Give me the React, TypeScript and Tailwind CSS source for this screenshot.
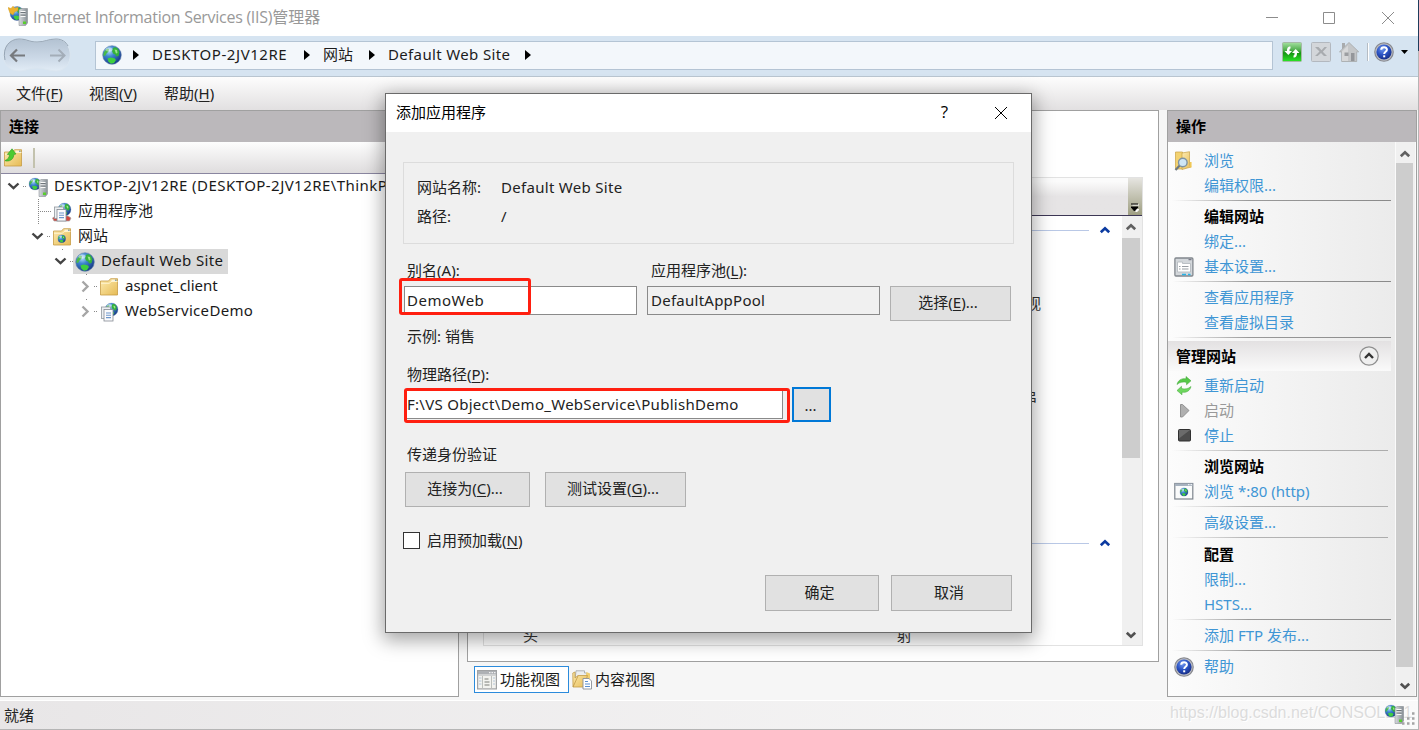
import type { ReactNode } from 'react';
import clsx from 'clsx';

const UI_FONT = "font-['Noto_Sans','Noto_Sans_CJK_SC',sans-serif]";

/* ---------- icons ---------- */

function Defs() {
  return (
    <svg width="0" height="0" className="absolute" aria-hidden>
      <defs>
        <radialGradient id="sea" cx="35%" cy="28%" r="75%">
          <stop offset="0" stopColor="#b9e2fb" />
          <stop offset="0.4" stopColor="#3f87d0" />
          <stop offset="1" stopColor="#173a86" />
        </radialGradient>
        <linearGradient id="folder" x1="0" y1="0" x2="1" y2="1">
          <stop offset="0" stopColor="#fdebb0" />
          <stop offset="1" stopColor="#e6bb55" />
        </linearGradient>
        <linearGradient id="steel" x1="0" y1="0" x2="1" y2="0">
          <stop offset="0" stopColor="#d9dde0" />
          <stop offset="1" stopColor="#868e94" />
        </linearGradient>
        <radialGradient id="help" cx="40%" cy="30%" r="75%">
          <stop offset="0" stopColor="#6f97ee" />
          <stop offset="0.5" stopColor="#2b53c4" />
          <stop offset="1" stopColor="#152a80" />
        </radialGradient>
        <linearGradient id="go" x1="0" y1="0" x2="0" y2="1">
          <stop offset="0" stopColor="#a4e0a0" />
          <stop offset="0.4" stopColor="#4fae4c" />
          <stop offset="0.55" stopColor="#169414" />
          <stop offset="1" stopColor="#2be626" />
        </linearGradient>
        <linearGradient id="nav" x1="0" y1="0" x2="0" y2="1">
          <stop offset="0" stopColor="#b3c2d2" />
          <stop offset="0.6" stopColor="#ccd9e7" />
          <stop offset="1" stopColor="#e2ecf6" />
        </linearGradient>
      </defs>
    </svg>
  );
}

function GlobeShape({ x = 0, y = 0, s = 20 }: { x?: number; y?: number; s?: number }) {
  return (
    <svg x={x} y={y} width={s} height={s} viewBox="0 0 20 20">
      <circle cx="10" cy="10" r="9.3" fill="url(#sea)" stroke="#5f7fae" strokeWidth="0.6" />
      <path d="M11 3c2-1.500 4-.5 5 1l1.500 3-1 4-2 .5-1.500-2-2-1-1-2.500z" fill="#35b23a" />
      <path d="M2 7l3-3.500 2 .5-.5 2.500-2 2L3 11l-1.800-.5z" fill="#49b94a" />
      <path d="M5.500 13.500l3-1 4 .8 1.500 1.700-2 3-3 .8-2.500-2z" fill="#3fce3f" />
      <path d="M12.500 4.500l2.500.5.500 3-1.500.5z" fill="#9be38a" />
      <ellipse cx="7" cy="4.500" rx="3.500" ry="2" fill="#fff" opacity="0.4" />
    </svg>
  );
}

function Globe() {
  return (
    <svg width="20" height="20" viewBox="0 0 20 20">
      <GlobeShape />
    </svg>
  );
}

function ServerIcon({ crown = false }: { crown?: boolean }) {
  return (
    <svg width="20" height="20" viewBox="0 0 20 20">
      {crown ? <GlobeShape x={1.500} y={0} s={15} /> : <GlobeShape x={0.500} y={0.500} s={13} />}
      {crown ? (
        <path d="M0 1.500l3 1 2-2.300 2 2 3-1.200v3.500L6.500 6 5 9 2 7z" fill="#eeb22c" stroke="#d09a20" strokeWidth="0.5" />
      ) : null}
      <path d="M11 4l2-1.500h6.500V17l-2 2.500H11z" fill="url(#steel)" stroke="#7c8388" strokeWidth="0.5" />
      <path d="M12.500 5.500h5M12.500 8h5M12.500 10.500h5" stroke="#f8f8f8" />
      <path d="M12.500 6.500h5M12.500 9h5" stroke="#5d656b" strokeWidth="0.8" />
      <rect x="15" y="15.500" width="3" height="2.500" fill="#58cf2c" />
    </svg>
  );
}

function FolderShape() {
  return (
    <>
      <path d="M1.500 4h8l2-2.300h7V18h-17z" fill="url(#folder)" stroke="#c79c45" strokeWidth="0.8" />
      <path d="M2 6.300h8.500l1.500-1.800h6.500" fill="none" stroke="#fff6d5" strokeWidth="0.9" />
      <path d="M12.500 3.200h3.500" stroke="#fff" />
      <path d="M16 3.200h1.500" stroke="#4f94d8" />
    </>
  );
}

function FolderIcon({ globe = false }: { globe?: boolean }) {
  return (
    <svg width="20" height="20" viewBox="0 0 20 20">
      <FolderShape />
      {globe ? <GlobeShape x={5.500} y={7.500} s={8.500} /> : null}
    </svg>
  );
}

function UpFolderIcon() {
  return (
    <svg width="20" height="20" viewBox="0 0 20 20">
      <FolderShape />
      <path d="M2 12.500c3-1 4.300-3 4.500-6H4.300L9 .8l4 5.200-2.200.5c0 4-3 7-7.800 6.500z" fill="#4ccb30" stroke="#2f9c1c" strokeWidth="0.6" />
    </svg>
  );
}

function PoolIcon({ lids = false }: { lids?: boolean }) {
  return (
    <svg width="20" height="20" viewBox="0 0 20 20">
      <GlobeShape x={5.500} y={0.500} s={14} />
      {lids ? <path d="M.5 16l3-2h12.500l3 2-1.500 3h-15.500z" fill="#d3473f" stroke="#a3a3a3" strokeWidth="0.7" /> : null}
      <rect x="2.500" y="5" width="9" height="11.500" fill="#eceff2" stroke="#92989f" strokeWidth="0.8" />
      <rect x="5" y="7.500" width="9" height="11.500" fill="#fbfbfc" stroke="#848b93" strokeWidth="0.8" />
      <path d="M7 11h5M7 13.300h5M7 15.600h5" stroke="#6d96ca" strokeWidth="1.100" />
    </svg>
  );
}

function HelpIcon() {
  return (
    <svg width="20" height="20" viewBox="0 0 20 20">
      <circle cx="10" cy="10" r="9.800" fill="#85868c" />
      <circle cx="10" cy="10" r="8.700" fill="#b9bbc2" />
      <circle cx="10" cy="10" r="7.600" fill="url(#help)" />
      <path d="M7.200 7.800c.1-3.400 5.800-3.300 5.700-.1 0 2.100-2.700 2.100-2.700 4.200" fill="none" stroke="#fff" strokeWidth="2" />
      <rect x="9.200" y="13.300" width="2" height="2" fill="#fff" />
    </svg>
  );
}

function RefreshBox() {
  return (
    <svg width="20" height="20" viewBox="0 0 20 20">
      <rect x="0.500" y="0.500" width="19" height="19" rx="1" fill="url(#go)" stroke="#a5b9a5" />
      <path d="M8.500 4.500C5.500 4.500 5 6.500 5 9H2.500L6.300 13 10 9H7.500c0-1.500 0-2.300 1-2.500z" fill="#fff" />
      <path d="M11.500 15.500c3 0 3.500-2 3.500-4.500h2.500L13.700 7 10 11h2.500c0 1.500 0 2.300-1 2.500z" fill="#fff" />
    </svg>
  );
}

function StopBox() {
  return (
    <svg width="20" height="20" viewBox="0 0 20 20">
      <rect x="0.500" y="0.500" width="19" height="19" rx="1" fill="#d3d6da" stroke="#b3b8bf" />
      <path d="M4 5h3.500l3 3.200L13.500 5H16l-4.200 4.700 4.200 4.300h-3l-3-3-3.300 3H4l4.500-4.500z" fill="#a8abaf" />
    </svg>
  );
}

function HomeIcon() {
  return (
    <svg width="20" height="20" viewBox="0 0 20 20">
      <rect x="3" y="1" width="3" height="6" fill="#a9abad" />
      <path d="M10 .5L.5 9.800h2.200V19.500h15V9.800h2z" fill="#c4c6c8" stroke="#a6a8aa" strokeWidth="0.8" />
      <path d="M10 2.500L3 9.500V19h6V3.500z" fill="#d7d8d9" />
      <rect x="5.500" y="10.500" width="4" height="3.500" fill="#9c9ea1" />
      <rect x="12" y="11" width="3.500" height="8" fill="#94969a" />
    </svg>
  );
}

function BrowseIcon() {
  return (
    <svg width="20" height="20" viewBox="0 0 20 20">
      <path d="M1.500 1h7v17h-7z" fill="#f3d270" stroke="#c9a144" strokeWidth="0.7" />
      <path d="M8 2l7.500-1.300V14l1.500 2-9 2.500z" fill="url(#folder)" stroke="#c9a144" strokeWidth="0.7" />
      <path d="M16.800 11v5.500" stroke="#f0c64f" strokeWidth="1.500" />
      <circle cx="8.800" cy="11.500" r="4.300" fill="#cfe6f6" stroke="#7e93a4" strokeWidth="1.400" />
      <path d="M5.500 14.800L1.500 19" stroke="#6d7880" strokeWidth="2.200" />
    </svg>
  );
}

function SettingsPageIcon() {
  return (
    <svg width="20" height="20" viewBox="0 0 20 20">
      <rect x="0.900" y="1" width="18" height="18" rx="1" fill="#d3d7db" stroke="#81878d" strokeWidth="1.300" />
      <path d="M14.500 2.700h3" stroke="#667" />
      <path d="M3.500 5h5v1.500h8V15h-13z" fill="#fff" stroke="#b6bbc1" strokeWidth="0.900" />
      <path d="M5 9.500h1.500M5 12h1.500M8 9.500h6.500M8 12h6.500" stroke="#989da3" />
      <path d="M8 17.500h4M14 17.500h2.500" stroke="#29b3e6" strokeWidth="1.600" />
    </svg>
  );
}

function BrowserIcon() {
  return (
    <svg width="20" height="20" viewBox="0 0 20 20">
      <rect x="0.800" y="1.500" width="18" height="15.500" fill="#fafbfb" stroke="#7d858e" strokeWidth="1.200" />
      <rect x="1" y="1.500" width="17.600" height="2.500" fill="#a7b2bf" />
      <path d="M14 2.700h1.500M16.500 2.700h1.500" stroke="#fff" />
      <GlobeShape x={5.500} y={5.500} s={9} />
    </svg>
  );
}

function RestartIcon() {
  return (
    <svg width="20" height="20" viewBox="0 0 20 20">
      <path d="M3 8.500C4 4 8 2 12 2.800V.5L17 4.800 12.500 8.800V6.500C9.500 5.500 6 6 3 8.500z" fill="#56c847" stroke="#3fa536" strokeWidth="0.500" />
      <path d="M17 10.500C16 15 12 17 8 16.200v2.600L3 14.500l4.500-4.200V12.500c3 1 6.500.5 9.500-2z" fill="#6fd75f" stroke="#3fa536" strokeWidth="0.500" />
    </svg>
  );
}

function StartIcon() {
  return (
    <svg width="20" height="20" viewBox="0 0 20 20">
      <path d="M6.500 3.500h2l6.500 6-6.500 6.500h-2z" fill="#b0b0b0" stroke="#8a8a8a" strokeWidth="0.900" />
    </svg>
  );
}

function StopIcon() {
  return (
    <svg width="20" height="20" viewBox="0 0 20 20">
      <rect x="4.500" y="3.500" width="12" height="11.500" rx="1" fill="#4d4d4d" stroke="#303030" />
      <path d="M5 4h11L5 12.500z" fill="#6b6b6b" />
    </svg>
  );
}

function FeaturesIcon() {
  return (
    <svg width="20" height="20" viewBox="0 0 20 20">
      <rect x="0.600" y="0.600" width="18.800" height="18.300" fill="#f3f3f0" stroke="#a0a2a4" strokeWidth="1.200" />
      <rect x="1" y="1" width="18" height="3.500" fill="#aeb1b5" />
      <path d="M12 2.700h1.500M14.500 2.700H16M17 2.700h1.500" stroke="#fff" />
      <path d="M1 5.500h18" stroke="#d0d2d3" />
      <path d="M5.500 6v12.500M14.500 6v12.500" stroke="#bcbfbc" />
      <path d="M2 8h2.500M2 11h2.500M2 14h2.500M16 8h2M16 11h2M16 14h2" stroke="#b4c6d8" />
      <path d="M7.500 9h4M7.500 12h5M7.500 15h5" stroke="#7c7f78" strokeWidth="1.200" />
    </svg>
  );
}

function ContentIcon() {
  return (
    <svg width="20" height="20" viewBox="0 0 20 20">
      <path d="M4 .8h8.500V3H15v7H3z" fill="#eceef0" stroke="#9fa3a7" strokeWidth="0.800" />
      <path d="M14.500 2l3.500 1.500v8h-5z" fill="#f0cf74" />
      <path d="M.8 3l2.200-1v6l3-2.500h9.500L12 17H1z" fill="url(#folder)" stroke="#c39c48" strokeWidth="0.800" />
      <path d="M1 17L6 6" stroke="#b78f3c" strokeWidth="0.700" />
      <path d="M11 8.500h6l2.500 2.500v8H11z" fill="#fff" stroke="#8b9097" strokeWidth="0.900" />
      <path d="M13 11.500h3M13 14h5M13 16.500h5" stroke="#5a8fd0" strokeWidth="1.100" />
    </svg>
  );
}

function Chevron({ dir, className }: { dir: 'up' | 'down'; className: string }) {
  return (
    <svg width="12" height="12" viewBox="0 0 12 12" className={className}>
      <path
        d={dir === 'up' ? 'M1.800 8.300L6 4.200l4.200 4.100' : 'M1.800 3.700L6 7.800l4.200-4.100'}
        fill="none"
        stroke="currentColor"
        strokeWidth="2.600"
      />
    </svg>
  );
}

function Crumb() {
  return (
    <svg width="6" height="10" viewBox="0 0 6 10" className="shrink-0">
      <path d="M0 0l6 5-6 5z" fill="#000" />
    </svg>
  );
}

/* ---------- small pieces ---------- */

function Key({ children }: { children: string }) {
  return (
    <>
      (<span className="underline underline-offset-2">{children}</span>)
    </>
  );
}

function PushButton({ className, children }: { className?: string; children: ReactNode }) {
  return (
    <button
      type="button"
      className={clsx(
        'flex items-center justify-center border-[1.5px] border-[#b0b0b0] bg-[#e1e1e1] pr-[5px] pb-[3px]',
        className,
      )}
    >
      <span>{children}</span>
    </button>
  );
}

/* ---------- window chrome ---------- */

function TitleBar() {
  return (
    <header className="flex h-9 shrink-0 items-center bg-white pb-[3px] pl-2">
      <span className="-mt-0.5"><ServerIcon crown /></span>
      <h1 className="ml-[5px] text-base leading-8 text-[#999] font-['Open_Sans','Noto_Sans_CJK_SC',sans-serif]">
        <span className="tracking-[-0.28px]">Internet Information Services (IIS)</span>管理器
      </h1>
      <div className="ml-auto flex items-center gap-[46px] pt-[2px] pr-[25px] text-[#8c8c8c]">
        <svg width="12" height="12" viewBox="0 0 12 12" className="-mr-px">
          <path d="M0 5.500h12" stroke="currentColor" />
        </svg>
        <svg width="12" height="12" viewBox="0 0 12 12">
          <path d="M.5.5h11v11H.5z" fill="none" stroke="currentColor" />
        </svg>
        <svg width="12" height="12" viewBox="0 0 12 12" className="ml-px">
          <path d="M0 0l12 12M12 0L0 12" stroke="currentColor" />
        </svg>
      </div>
    </header>
  );
}

function AddressBar() {
  return (
    <div className="flex h-[41px] shrink-0 items-start border-b border-[#b9c5d0] bg-[#d6e4f1]">
      <svg width="70" height="36" viewBox="0 0 70 36" className="ml-[3px] mt-0.5 shrink-0">
        <path
          d="M16 1c8 0 10 3 18 3s11-3 19-3c19 0 19 32 0 32-8 0-11-3-19-3s-10 3-18 3C-5 33-5 1 16 1z"
          fill="url(#nav)"
          stroke="#dbe6f0"
        />
        <path d="M2 22C-1 9 7 1 16 1c8 0 10 3 18 3s11-3 19-3c6 0 10 3 12 7" fill="none" stroke="#97a6b5" />
        <path d="M22 17.500H8.500M14 11.500l-6 6 6 6" fill="none" stroke="#777a7e" strokeWidth="2.200" />
        <path d="M47 17.500h14M55.500 11.500l6 6-6 6" fill="none" stroke="#a3adb8" strokeWidth="2" />
      </svg>
      <div className="ml-[22px] mt-[5px] flex h-[29px] w-[1178px] shrink-0 items-center border border-[#b4c4d4] bg-[#f3f7fb] pb-0.5 pl-1.5 text-[#1c1c1c]">
        <Globe />
        <div className="ml-[11px] flex items-center">
          <Crumb />
          <span className="ml-[13px] w-[152px] pb-0.5 tracking-[0.55px]">DESKTOP-2JV12RE</span>
          <Crumb />
          <span className="ml-[13px] w-[46px] pb-0.5">网站</span>
          <Crumb />
          <span className="ml-[13px] w-[137px] pb-0.5 tracking-[0.35px]">Default Web Site</span>
          <Crumb />
        </div>
      </div>
      <div className="ml-[9px] mt-1.5 flex items-center">
        <RefreshBox />
        <span className="ml-[9px]"><StopBox /></span>
        <span className="ml-2"><HomeIcon /></span>
        <span className="ml-2 h-[18px] w-0.5 border-l border-[#b5bcc4] bg-white" />
        <span className="ml-[5px]"><HelpIcon /></span>
        <svg width="7" height="4" viewBox="0 0 7 4" className="ml-[7px]">
          <path d="M0 0h7L3.500 4z" />
        </svg>
      </div>
    </div>
  );
}

function MenuBar() {
  return (
    <nav className="flex h-[33px] shrink-0 items-center bg-linear-to-b from-[#fdfdfd] to-[#e2e0e1] pb-0.5 pl-4 text-[#222]">
      <span className="w-[73px]">文件<Key>F</Key></span>
      <span className="w-[75px]">视图<Key>V</Key></span>
      <span>帮助<Key>H</Key></span>
    </nav>
  );
}

/* ---------- connections tree ---------- */

type TreeNode = {
  label: string;
  depth: number;
  state?: 'open' | 'closed';
  stub?: boolean;
  selected?: boolean;
  tracking?: string;
  icon: ReactNode;
};

const nodes: TreeNode[] = [
  {
    label: 'DESKTOP-2JV12RE (DESKTOP-2JV12RE\\ThinkPad)',
    depth: 0,
    state: 'open',
    tracking: 'tracking-[0.45px]',
    icon: <ServerIcon />,
  },
  { label: '应用程序池', depth: 1, icon: <PoolIcon lids /> },
  { label: '网站', depth: 1, state: 'open', icon: <FolderIcon globe /> },
  {
    label: 'Default Web Site',
    depth: 2,
    state: 'open',
    stub: true,
    selected: true,
    tracking: 'tracking-[0.35px]',
    icon: <Globe />,
  },
  { label: 'aspnet_client', depth: 3, state: 'closed', stub: true, icon: <FolderIcon /> },
  {
    label: 'WebServiceDemo',
    depth: 3,
    state: 'closed',
    stub: true,
    tracking: 'tracking-[0.3px]',
    icon: <PoolIcon />,
  },
];

const indent = ['pl-0', 'pl-6', 'pl-[47px]', 'pl-[71px]'];

function TreeRow({ node }: { node: TreeNode }) {
  return (
    <li className={clsx('flex h-[25px] items-center whitespace-nowrap', indent[node.depth])}>
      <svg width="26" height="25" viewBox="0 0 26 25" className="shrink-0">
        {node.state === 'open' ? (
          <path d="M7.500 9.500l5 4.700 5-4.700" fill="none" stroke="#444" strokeWidth="2.400" />
        ) : null}
        {node.state === 'closed' ? (
          <path d="M10.500 7.500l5 5-5 5" fill="none" stroke="#a6a6a6" strokeWidth="2.400" />
        ) : null}
        {node.state ? (
          <path d="M22 12.500h4" stroke="#888" strokeDasharray="1 1" />
        ) : (
          <path d="M13.500 0v25M15 12.500h11" fill="none" stroke="#888" strokeDasharray="1 1" />
        )}
        {node.stub ? <path d="M14.500 0v2" stroke="#888" strokeDasharray="1 1" /> : null}
      </svg>
      <span className={clsx('flex h-[25px] items-center', node.selected ? '-ml-px bg-[#d9d9d9] pr-[5px] pl-0.5' : 'pl-px')}>
        {node.icon}
        <span className={clsx('ml-1.5 pb-[3px]', node.tracking)}>{node.label}</span>
      </span>
    </li>
  );
}

function Connections() {
  return (
    <section className="flex w-[459px] shrink-0 flex-col border border-[#a0a0a0] bg-white">
      <h2 className="flex h-[31px] items-center bg-[#bbb8bb] pb-0.5 pl-2 font-bold text-black">连接</h2>
      <div className="flex h-8 items-center border-b-[1.5px] border-[#8a86a0] bg-linear-to-b from-[#fdfdfd] to-[#dfddde] pt-px pl-0.5">
        <UpFolderIcon />
        <span className="ml-2.5 h-5 w-0.5 bg-[#c3c2ae]" />
      </div>
      <ul className="overflow-hidden text-[#1a1a1a]">
        {nodes.map((n) => (
          <TreeRow key={n.label} node={n} />
        ))}
      </ul>
    </section>
  );
}

/* ---------- feature view ---------- */

function GroupRule() {
  return (
    <div className="flex h-7 shrink-0 items-center pr-[11px]">
      <span className="mr-2.5 h-px flex-1 bg-[#b9c8e6]" />
      <Chevron dir="up" className="text-[#0b3aa0]" />
    </div>
  );
}

function Features() {
  return (
    <section className="ml-2 flex w-[692px] shrink-0 flex-col">
      <div className="flex h-[552px] flex-col border border-[#a0a0a0] bg-white px-[15px] pt-[66px] pb-[15px]">
        <div className="flex min-h-0 flex-1 flex-col border border-[#e2e2e2]">
          <div className="flex h-[38px] shrink-0 border-b border-[#3d3755] bg-linear-to-b from-[#fbfbfb] from-10% to-[#e6e4e5] to-50%">
            <div className="ml-auto flex w-3.5 items-end justify-center bg-linear-to-b from-[#e6e5e1] to-[#9f9f82] pb-[3px]">
              <svg width="8" height="9" viewBox="0 0 8 9">
                <path d="M1.500 2h6.500M3 6.500h5L5.500 9z" stroke="#fff" fill="#fff" />
                <path d="M0 1h7M0 4h7L3.500 8z" stroke="#000" strokeWidth="1" fill="#000" />
              </svg>
            </div>
          </div>
          <div className="flex min-h-0 flex-1">
            <div className="flex flex-1 flex-col overflow-hidden text-[#333]">
              <GroupRule />
              <div className="flex h-[77px] shrink-0 items-end justify-end pr-[81px] pb-1.5">视</div>
              <div className="flex h-[94px] shrink-0 items-end justify-end pr-[85px] pb-1.5">串</div>
              <div className="h-[114px] shrink-0" />
              <GroupRule />
              <div className="mt-[66px] flex h-6 shrink-0 pl-[39px]">
                <span className="w-[374px]">头</span>
                <span>射</span>
              </div>
            </div>
            <div className="flex w-5 flex-col items-center bg-[#f0f0f0] pr-0.5">
              <Chevron dir="up" className="my-[5px] shrink-0 text-[#606060]" />
              <div className="h-[220px] w-full shrink-0 bg-[#cdcdcd]" />
              <Chevron dir="down" className="mt-auto mb-1 text-[#505050]" />
            </div>
          </div>
        </div>
      </div>
      <div className="mt-1 flex items-center pl-[7px] text-[#1a1a1a]">
        <span className="flex h-[27px] w-[95px] items-center border-[1.5px] border-[#2b8bdc] bg-white pl-0.5">
          <FeaturesIcon />
          <span className="ml-[3px] pb-0.5">功能视图</span>
        </span>
        <span className="ml-[3px] flex items-center">
          <ContentIcon />
          <span className="ml-[3px] pb-0.5">内容视图</span>
        </span>
      </div>
    </section>
  );
}

/* ---------- actions pane ---------- */

function Rule({ className = 'h-1.5', light }: { className?: string; light?: boolean }) {
  return (
    <div className={clsx('pt-0.5 pl-1', className)}>
      <div
        className={clsx(
          'h-px bg-linear-to-r from-transparent',
          light ? 'w-[216px] via-[#b4b4b4] via-35% to-[#acacac]' : 'w-[219px] via-[#9a9a9a] via-35% to-[#8a8a8a]',
        )}
      />
    </div>
  );
}

function Action({ icon, muted, children }: { icon?: ReactNode; muted?: boolean; children: ReactNode }) {
  return (
    <div className={clsx('flex h-[25px] items-center pl-1.5', muted ? 'text-[#999]' : 'text-[#3f96d5]')}>
      <span className="flex w-[30px] shrink-0">{icon}</span>
      <span className="pb-0.5">{children}</span>
    </div>
  );
}

function Heading({ children }: { children: string }) {
  return <h3 className="flex h-[25px] items-center pb-0.5 pl-9 font-bold text-black">{children}</h3>;
}

function Actions() {
  return (
    <aside className="ml-2 flex w-[250px] shrink-0 flex-col border border-[#a0a0a0]">
      <h2 className="flex h-[31px] shrink-0 items-center bg-[#bbb8bb] pb-0.5 pl-2 font-bold text-black">操作</h2>
      <div className="flex min-h-0 flex-1">
        <div className="flex-1 bg-linear-to-r from-[#fcfcfc] to-[#ebebeb] pt-1.5">
          <Action icon={<BrowseIcon />}>浏览</Action>
          <Action>编辑权限...</Action>
          <Rule />
          <Heading>编辑网站</Heading>
          <Action>绑定...</Action>
          <Action icon={<SettingsPageIcon />}>基本设置...</Action>
          <Rule />
          <Action>查看应用程序</Action>
          <Action>查看虚拟目录</Action>
          <Rule />
          <div className="mb-0.5 flex h-[30px] w-[223px] items-center bg-linear-to-b from-[#e3e1e2] to-[#fafafa] pl-2">
            <h3 className="font-bold text-black">管理网站</h3>
            <svg width="20" height="20" viewBox="0 0 20 20" className="mr-3 ml-auto">
              <circle cx="10" cy="10" r="9.200" fill="#efefef" stroke="#8f8f8f" strokeWidth="1.200" />
              <path d="M6 12l4-4 4 4" fill="none" stroke="#333" strokeWidth="2.400" />
            </svg>
          </div>
          <Action icon={<RestartIcon />}>重新启动</Action>
          <Action icon={<StartIcon />} muted>启动</Action>
          <Action icon={<StopIcon />}>停止</Action>
          <Rule light />
          <Heading>浏览网站</Heading>
          <Action icon={<BrowserIcon />}>浏览 *:80 (http)</Action>
          <Rule light />
          <Action>高级设置...</Action>
          <Rule light className="h-[7px]" />
          <Heading>配置</Heading>
          <Action>限制...</Action>
          <Action>HSTS...</Action>
          <Rule />
          <Action>添加 FTP 发布...</Action>
          <Rule />
          <Action icon={<HelpIcon />}>帮助</Action>
        </div>
        <div className="flex w-[21px] flex-col items-center border-x border-[#fafafa] bg-[#f0f0f0] pr-0.5">
          <Chevron dir="up" className="mt-1.5 mb-[3px] shrink-0 text-[#606060]" />
          <div className="w-full flex-1 bg-[#cdcdcd]" />
          <Chevron dir="down" className="mt-[13px] mb-1 shrink-0 text-[#505050]" />
        </div>
      </div>
    </aside>
  );
}

function StatusBar() {
  return (
    <footer className="mt-[3px] flex h-[30px] shrink-0 items-center border-t border-b border-t-white border-b-[#b5b5b5] bg-linear-to-r from-[#e8e6e7] to-[#fafafa] pl-1 text-[#222]">
      <span className="pb-px">就绪</span>
      <div className="relative mr-1 ml-auto flex h-full w-[245px] items-center">
        <span className="pb-1 text-base text-[#dcdcdc] font-['Liberation_Sans',sans-serif] [text-shadow:1px_1px_0_#fff]">
          https://blog.csdn.net/CONSOLE11
        </span>
        <span className="absolute top-[3px] right-[11px]">
          <ServerIcon />
        </span>
        <svg width="14" height="14" viewBox="0 0 14 14" className="absolute right-0 bottom-[3px] text-[#a4a4a4]">
          <path d="M11 1.500h2.500M6 6.500h2.500M11 6.500h2.500M1 11.500h2.500M6 11.500h2.500M11 11.500h2.500" stroke="currentColor" strokeWidth="2.500" />
        </svg>
      </div>
    </footer>
  );
}

/* ---------- dialog ---------- */

function AddApplicationDialog() {
  return (
    <div
      role="dialog"
      className="absolute top-[93px] left-[385px] flex h-[540px] w-[647px] flex-col border border-[#6a6a6a] bg-[#f0f0f0] text-[#222] shadow-[0_5px_18px_2px_rgba(0,0,0,0.36)]"
    >
      <div className="flex h-[38px] shrink-0 items-center bg-white pb-0.5 pl-2.5 text-black">
        添加应用程序
        <span className="ml-auto text-[17px] font-['Open_Sans',sans-serif]">?</span>
        <svg width="12" height="12" viewBox="0 0 12 12" className="mt-px mr-6 ml-[47px]">
          <path d="M0 0l12 12M12 0L0 12" stroke="#000" />
        </svg>
      </div>

      <div className="mt-[30px] ml-[17px] h-[82px] w-[611px] border-[1.5px] border-[#dcdcdc] pt-2.5 pl-[13px]">
        <div className="flex h-[29px] items-center pb-px">
          <span className="w-[84px]">网站名称:</span>
          <span className="tracking-[0.3px]">Default Web Site</span>
        </div>
        <div className="flex h-[29px] items-center pb-px">
          <span className="w-[84px]">路径:</span>/
        </div>
      </div>

      <div className="mt-[13px] flex h-[25px] items-center pl-[21px]">
        <span className="w-[244px]">别名<Key>A</Key>:</span>
        <span>应用程序池<Key>L</Key>:</span>
      </div>
      <div className="mt-1 flex items-start pl-[18px]">
        <div className="relative flex h-[29px] w-[233px] items-center border-[1.5px] border-[#8a8a8a] bg-white pb-0.5 pl-0.5">
          <span className="tracking-[0.5px]">DemoWeb</span>
          <span className="absolute -top-[9px] -left-1.5 h-[37px] w-[132px] rounded-[3px] border-[3px] border-[#ff1f10]" />
        </div>
        <div className="ml-2.5 flex h-[29px] w-[233px] items-center border-[1.5px] border-[#8a8a8a] pb-0.5 pl-[3px]">
          <span className="tracking-[0.25px]">DefaultAppPool</span>
        </div>
        <PushButton className="ml-2.5 h-[35px] w-[121px]">选择<Key>E</Key>...</PushButton>
      </div>
      <div className="mt-0.5 flex h-[25px] items-center pl-[21px]">示例: 销售</div>
      <div className="mt-[13px] flex h-[25px] items-center pl-[21px]">物理路径<Key>P</Key>:</div>
      <div className="mt-px flex items-center pl-[18px]">
        <div className="relative flex h-[29px] w-[379px] items-center border-[1.5px] border-[#8a8a8a] bg-white pb-0.5 pl-0.5">
          <span className="tracking-[0.28px]">F:\VS Object\Demo_WebService\PublishDemo</span>
          <span className="absolute -top-[3px] -left-px h-[35px] w-[386px] rounded-[3px] border-[3px] border-[#ff1f10]" />
        </div>
        <button
          type="button"
          className="ml-[9px] flex h-[35px] w-[39px] items-center justify-center border-2 border-[#0078d7] bg-[#e1e1e1] pr-0.5"
        >
          ...
        </button>
      </div>
      <div className="mt-[19px] flex h-[25px] items-center pl-[21px]">传递身份验证</div>
      <div className="mt-1.5 flex pl-[19px]">
        <PushButton className="h-[35px] w-[125px]">连接为<Key>C</Key>...</PushButton>
        <PushButton className="ml-[15px] h-[35px] w-[141px]">测试设置<Key>G</Key>...</PushButton>
      </div>
      <label className="mt-[21px] flex h-[25px] items-center pl-[17px]">
        <span className="mr-[7px] size-[17px] border-[1.5px] border-[#333] bg-white" />
        <span className="pb-0.5">启用预加载<Key>N</Key></span>
      </label>
      <div className="mt-[22px] flex justify-end pr-[19px]">
        <PushButton className="h-9 w-[114px]">确定</PushButton>
        <PushButton className="ml-3 h-9 w-[121px]">取消</PushButton>
      </div>
    </div>
  );
}

export default function App() {
  return (
    <div className={clsx('relative flex h-[730px] w-[1419px] flex-col overflow-hidden bg-[#f6f6f6] text-[15px] leading-6', UI_FONT)}>
      <Defs />
      <TitleBar />
      <AddressBar />
      <MenuBar />
      <main className="flex h-[587px] shrink-0">
        <Connections />
        <Features />
        <Actions />
      </main>
      <StatusBar />
      <AddApplicationDialog />
      <div className="absolute top-0 right-0 h-full w-px bg-linear-to-b from-[#1d3d5c] from-7% to-[#b5b5b5] to-7%" />
    </div>
  );
}
